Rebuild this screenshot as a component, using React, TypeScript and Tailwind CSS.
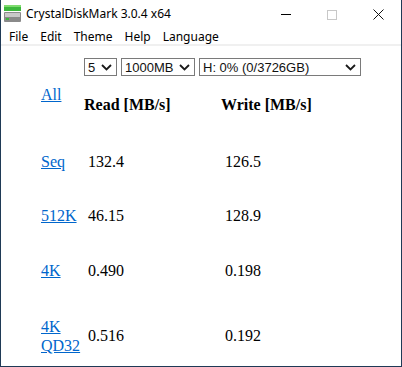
import React from "react";

const Chevron = () => (
  <svg width="11" height="7" viewBox="0 0 11 7" className="shrink-0">
    <path d="M1 1 L5.5 5.5 L10 1" fill="none" stroke="#1a1a1a" strokeWidth="1.8" />
  </svg>
);

const Box = ({ label, w }: { label: string; w: string }) => (
  <div
    className={`${w} h-[18px] border border-[#7a7a7a] flex items-center justify-between pl-[3px] pr-[4px] text-[13px] leading-none text-[#111]`}
  >
    <span>{label}</span>
    <Chevron />
  </div>
);

const rows = [
  { label: ["Seq"], read: "132.4", write: "126.5", mt: "mt-[38px]" },
  { label: ["512K"], read: "46.15", write: "128.9", mt: "mt-[35px]" },
  { label: ["4K"], read: "0.490", write: "0.198", mt: "mt-[36px]" },
  { label: ["4K", "QD32"], read: "0.516", write: "0.192", mt: "mt-[37px]" },
];

export default function App() {
  return (
    <div className="w-[402px] h-[367px] bg-white border-x border-b border-[#1f3a56] overflow-hidden">
      {/* title bar */}
      <div className="h-[29px] flex items-center font-['Noto_Sans',sans-serif] text-[12px] leading-[16px] text-black">
        <svg width="17" height="17" viewBox="0 0 17 17" className="ml-[3px] mt-[-2px]">
          <rect x="0" y="0" width="17" height="6" fill="#3cb83c" />
          <rect x="0" y="0" width="17" height="2" fill="#7fdc6f" />
          <rect x="0" y="7" width="17" height="10" rx="1" fill="#8a8a8a" />
          <rect x="1" y="8" width="15" height="4" fill="#c8c8c8" />
          <rect x="2" y="13" width="3" height="2" fill="#3cb83c" />
        </svg>
        <span className="ml-[5px] mt-[-1px]">CrystalDiskMark 3.0.4 x64</span>
        <div className="ml-auto flex items-center">
          <div className="w-[46px] flex justify-center">
            <div className="w-[10px] h-px bg-black" />
          </div>
          <div className="w-[46px] flex justify-center">
            <div className="w-[10px] h-[10px] border border-[#c8c8c8]" />
          </div>
          <div className="w-[46px] flex justify-center">
            <svg width="11" height="11" viewBox="0 0 11 11">
              <path d="M0.5 0.5 L10.5 10.5 M10.5 0.5 L0.5 10.5" stroke="#111" strokeWidth="1" />
            </svg>
          </div>
        </div>
      </div>

      {/* menu bar */}
      <div className="h-[15px] flex items-center font-['Noto_Sans',sans-serif] text-[12px] leading-[16px] text-black pl-[8px] gap-[12px]">
        <span>File</span>
        <span>Edit</span>
        <span>Theme</span>
        <span>Help</span>
        <span>Language</span>
      </div>
      <div className="h-[2px] bg-[#f0f0f0]" />

      {/* controls */}
      <div className="mt-[12px] ml-[83px] flex gap-[4px] font-['Liberation_Sans',Arial,sans-serif]">
        <Box label="5" w="w-[33px]" />
        <Box label="1000MB" w="w-[74px]" />
        <Box label="H: 0% (0/3726GB)" w="w-[162px]" />
      </div>

      {/* results */}
      <div className="font-['Liberation_Serif','Times_New_Roman',serif] text-[16px] leading-[18px] text-black">
        <div className="flex items-start mt-[10px]">
          <a className="ml-[40px] w-[43px] text-[#0066cc] underline">All</a>
          <div className="mt-[10px] w-[137px] font-bold">Read [MB/s]</div>
          <div className="mt-[10px] font-bold">Write [MB/s]</div>
        </div>
        {rows.map((r) => (
          <div key={r.read} className={`flex items-center ${r.mt}`}>
            <div className="ml-[40px] w-[47px] flex flex-col leading-[19px]">
              {r.label.map((l) => (
                <a key={l} className="text-[#0066cc] underline">
                  {l}
                </a>
              ))}
            </div>
            <div className="w-[137px]">{r.read}</div>
            <div>{r.write}</div>
          </div>
        ))}
      </div>
    </div>
  );
}
